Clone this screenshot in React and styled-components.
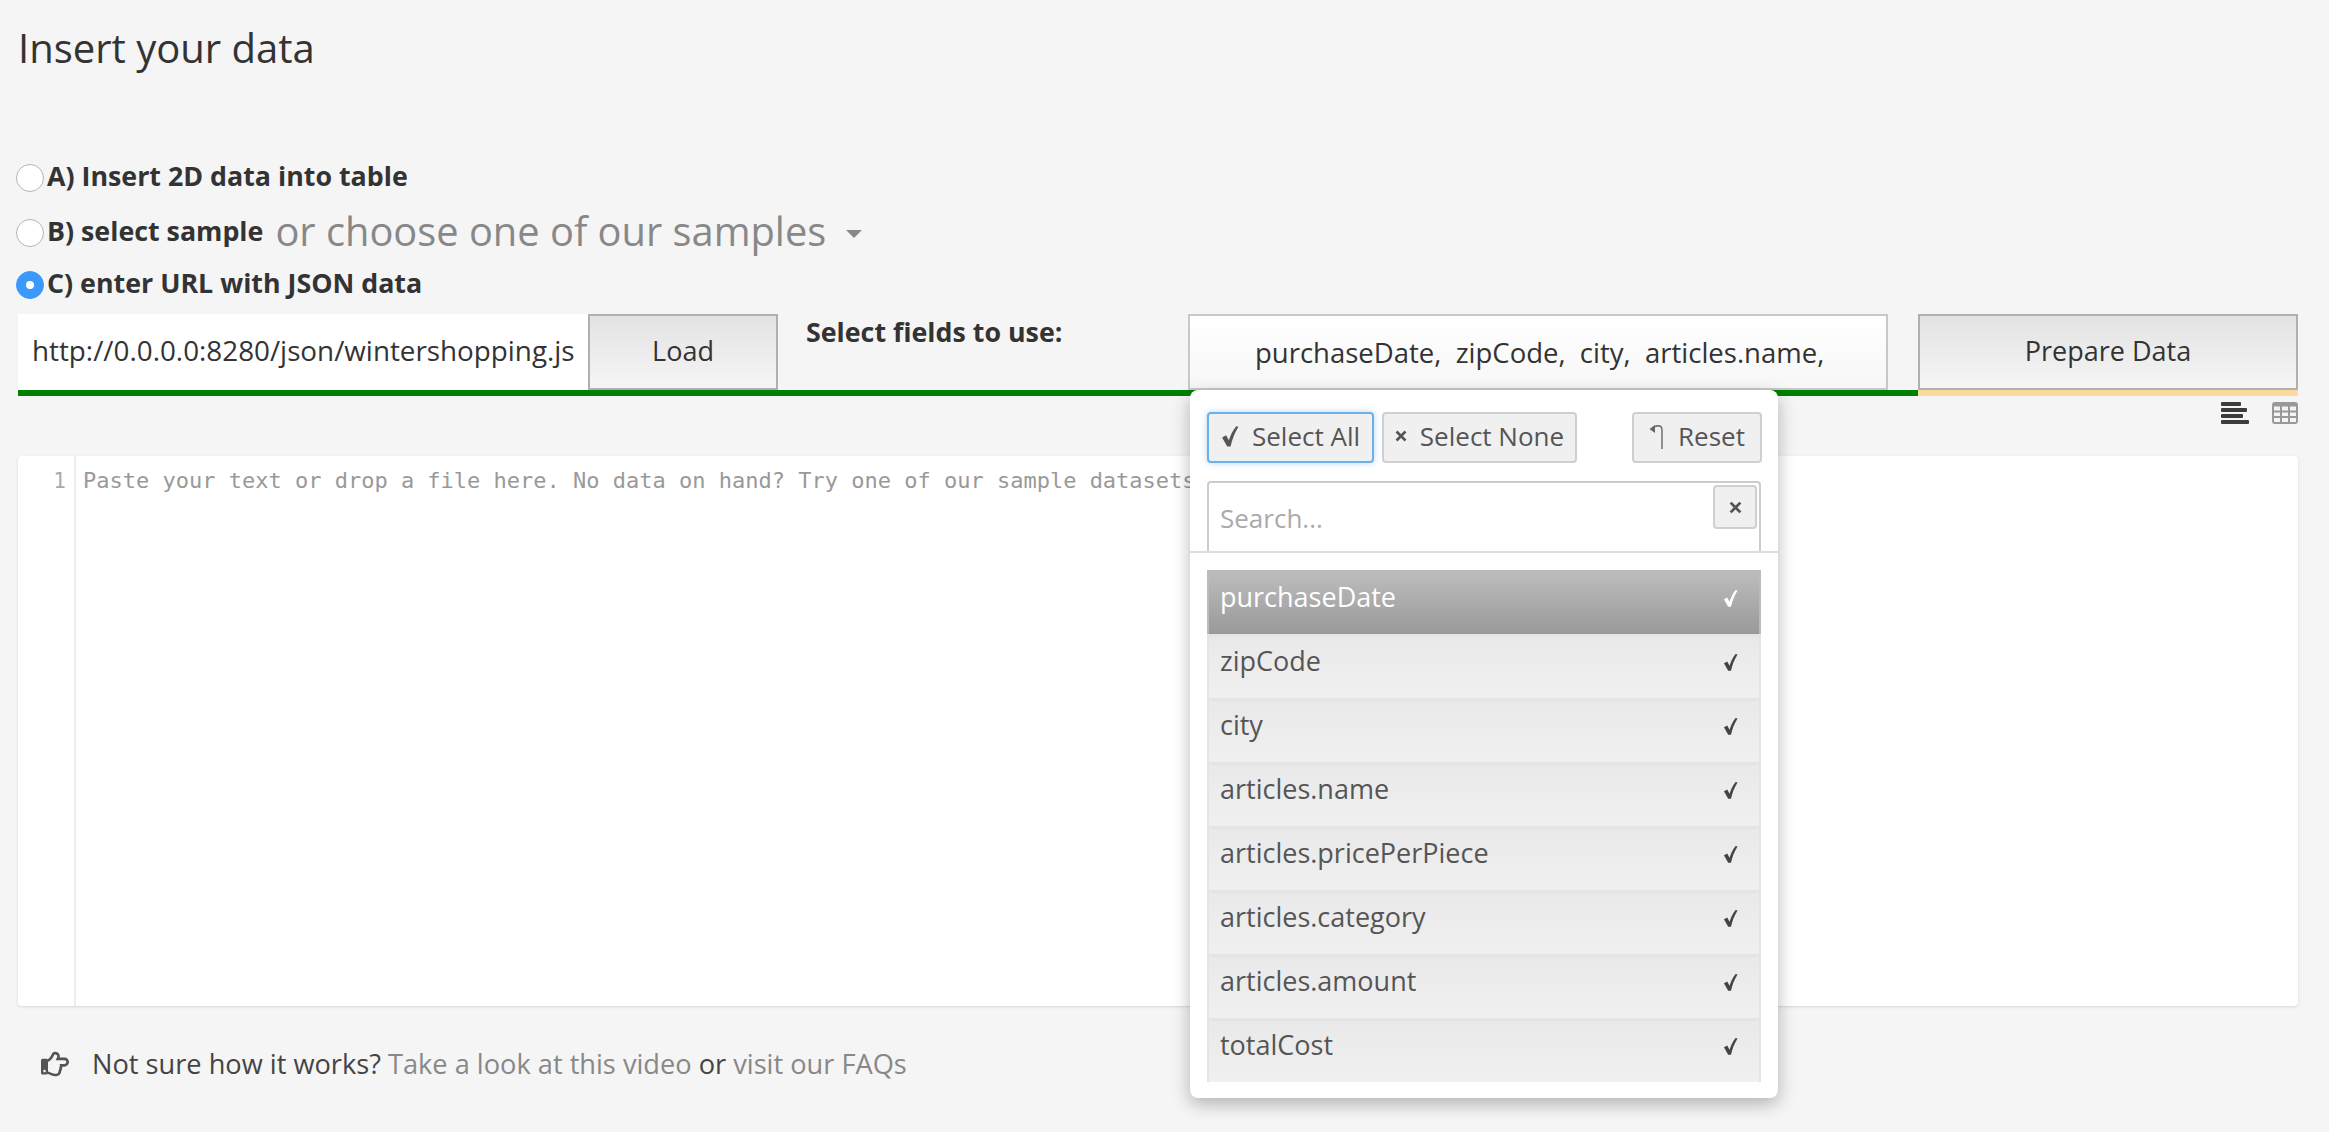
import styled, { createGlobalStyle } from "styled-components";
import { FaRegHandPointRight } from "react-icons/fa";

const fields = [
  "purchaseDate",
  "zipCode",
  "city",
  "articles.name",
  "articles.pricePerPiece",
  "articles.category",
  "articles.amount",
  "totalCost",
];

function Check({ size = 16, color = "#555" }) {
  return (
    <svg width={size} height={size * 1.25} viewBox="0 0 16 20">
      <path d="M1 11 L4.5 9 L7 13.5 C8.5 9 10.5 4.5 13.5 1 L15.5 1.5 C12 7 10 12.5 8.5 19 L5.5 19 Z" fill={color} />
    </svg>
  );
}

function Cross({ size = 12 }) {
  return (
    <svg width={size} height={size} viewBox="0 0 12 12">
      <path d="M1.5 1.5 L10.5 10.5 M10.5 1.5 L1.5 10.5" stroke="#555" strokeWidth="2.6" />
    </svg>
  );
}

function App() {
  return (
    <Page>
      <GlobalStyle />
      <Title>Insert your data</Title>

      <RadioRow>
        <Radio />
        <RadioLabel>A) Insert 2D data into table</RadioLabel>
      </RadioRow>
      <RadioRow $gap={55}>
        <Radio />
        <RadioLabel>B) select sample</RadioLabel>
        <SampleSelect>or choose one of our samples</SampleSelect>
        <Caret />
      </RadioRow>
      <RadioRow $gap={52}>
        <Radio $checked />
        <RadioLabel>C) enter URL with JSON data</RadioLabel>
      </RadioRow>

      <Toolbar>
        <LeftBar>
          <UrlInput readOnly value="http://0.0.0.0:8280/json/wintershopping.json" />
          <ActionButton $width={190}>Load</ActionButton>
          <FieldsLabel>Select fields to use:</FieldsLabel>
          <SelectWrap>
            <SelectBox>purchaseDate,&nbsp; zipCode,&nbsp; city,&nbsp; articles.name,</SelectBox>
            <Dropdown>
              <DropdownActions>
                <MiniButton $width={167} $focus>
                  <Check size={18} />
                  Select All
                </MiniButton>
                <MiniButton $width={195}>
                  <Cross />
                  Select None
                </MiniButton>
                <MiniButton $width={130} $push>
                  <svg width="16" height="28" viewBox="0 0 16 28">
                    <path d="M3 7 C6 3 13 2 13 8 L13 27" fill="none" stroke="#666" strokeWidth="1.4" />
                    <path d="M0.5 7 L6 3 L6 11 Z" fill="#666" />
                  </svg>
                  Reset
                </MiniButton>
              </DropdownActions>
              <SearchBox>
                Search...
                <ClearButton>
                  <Cross size={13} />
                </ClearButton>
              </SearchBox>
              <FieldList>
                {fields.map((name, i) => (
                  <FieldItem key={name} $active={i === 0}>
                    {name}
                    <Check size={15} color={i === 0 ? "#fff" : "#444"} />
                  </FieldItem>
                ))}
              </FieldList>
            </Dropdown>
          </SelectWrap>
        </LeftBar>
        <RightBar>
          <ActionButton $width={380}>Prepare Data</ActionButton>
        </RightBar>
      </Toolbar>

      <ViewIcons>
        <svg width="28" height="22" viewBox="0 0 28 22">
          <g fill="#3c3c3c">
            <rect x="0" y="0" width="20" height="4" rx="1" />
            <rect x="0" y="6" width="26" height="4" rx="1" />
            <rect x="0" y="12" width="22" height="4" rx="1" />
            <rect x="0" y="18" width="28" height="4" rx="1" />
          </g>
        </svg>
        <svg width="26" height="22" viewBox="0 0 26 22">
          <rect width="26" height="22" rx="3" fill="#999" />
          <g fill="#f4f4f4">
            <rect x="2" y="4.5" width="6" height="4" />
            <rect x="10" y="4.5" width="6" height="4" />
            <rect x="18" y="4.5" width="6" height="4" />
            <rect x="2" y="10.5" width="6" height="3.5" />
            <rect x="10" y="10.5" width="6" height="3.5" />
            <rect x="18" y="10.5" width="6" height="3.5" />
            <rect x="2" y="16" width="6" height="4" />
            <rect x="10" y="16" width="6" height="4" />
            <rect x="18" y="16" width="6" height="4" />
          </g>
        </svg>
      </ViewIcons>

      <Editor>
        <Gutter>1</Gutter>
        <Placeholder>
          Paste your text or drop a file here. No data on hand? Try one of our sample datasets:
        </Placeholder>
      </Editor>

      <Footer>
        <FaRegHandPointRight size={28} color="#555" />
        <span>
          Not sure how it works? <FooterLink>Take a look at this video</FooterLink> or{" "}
          <FooterLink>visit our FAQs</FooterLink>
        </span>
      </Footer>
    </Page>
  );
}

const GlobalStyle = createGlobalStyle`
  html, body {
    margin: 0;
    padding: 0;
    background: #f5f5f5;
  }
  body {
    font-family: "Open Sans", "Noto Sans", sans-serif;
    color: #333;
  }
  * {
    box-sizing: border-box;
  }
`;

const Page = styled.div`
  width: 2329px;
  height: 1132px;
  padding: 0 31px 0 18px;
  overflow: hidden;
`;

const Title = styled.h1`
  margin: 0;
  height: 164px;
  padding-top: 24px;
  font-size: 40px;
  line-height: 48px;
  font-weight: 400;
  color: #333;
`;

const RadioRow = styled.div`
  height: ${(props) => props.$gap || 28}px;
  margin-left: -3px;
  display: flex;
  align-items: ${(props) => (props.$gap ? "flex-end" : "center")};
  white-space: nowrap;
`;

const Radio = styled.span`
  position: relative;
  flex: none;
  width: 28px;
  height: 28px;
  margin-left: 1px;
  margin-right: 3px;
  border-radius: 50%;
  background: ${(props) => (props.$checked ? "#3b99fc" : "#fff")};
  border: 1px solid ${(props) => (props.$checked ? "#3b99fc" : "#b5b5b5")};

  &::after {
    content: "";
    display: ${(props) => (props.$checked ? "block" : "none")};
    position: absolute;
    left: 9px;
    top: 9px;
    width: 8px;
    height: 8px;
    border-radius: 50%;
    background: #fff;
  }
`;

const RadioLabel = styled.span`
  position: relative;
  top: -2px;
  font-size: 26.8px;
  line-height: 28px;
  font-weight: 700;
  color: #333;
`;

const SampleSelect = styled.span`
  position: relative;
  top: -2px;
  margin-left: 12px;
  font-size: 39.8px;
  line-height: 28px;
  color: #888;
`;

const Caret = styled.span`
  width: 0;
  height: 0;
  margin: 0 0 9px 20px;
  border-left: 8px solid transparent;
  border-right: 8px solid transparent;
  border-top: 8px solid #888;
`;

const Toolbar = styled.div`
  display: flex;
  margin-top: 15px;
  height: 82px;
`;

const LeftBar = styled.div`
  width: 1900px;
  display: flex;
  border-bottom: 6px solid green;
`;

const RightBar = styled.div`
  width: 380px;
  display: flex;
  border-bottom: 6px solid #fada9f;
`;

const UrlInput = styled.input`
  width: 570px;
  height: 76px;
  padding: 0 14px 4px;
  border: 0;
  outline: 0;
  background: #fff;
  font-family: inherit;
  font-size: 27.8px;
  color: #333;
`;

const ActionButton = styled.div`
  flex: none;
  width: ${(props) => props.$width}px;
  height: 76px;
  padding-bottom: 4px;
  display: flex;
  align-items: center;
  justify-content: center;
  border: 2px solid #b0b0b0;
  background: linear-gradient(#e3e3e3, #f5f5f5);
  font-size: 27px;
  color: #333;
`;

const FieldsLabel = styled.div`
  width: 410px;
  padding: 1px 0 0 28px;
  font-size: 26.8px;
  line-height: 34px;
  font-weight: 700;
  color: #333;
`;

const SelectWrap = styled.div`
  position: relative;
  width: 700px;
`;

const SelectBox = styled.div`
  height: 76px;
  padding-left: 65px;
  display: flex;
  align-items: center;
  white-space: nowrap;
  border: 2px solid #c8c8c8;
  background: linear-gradient(#fff, #f7f7f7);
  font-size: 27.5px;
  color: #333;
`;

const Dropdown = styled.div`
  position: absolute;
  z-index: 5;
  left: 2px;
  top: 76px;
  width: 588px;
  height: 708px;
  background: #fff;
  border-radius: 8px;
  box-shadow: 0 6px 18px rgba(0, 0, 0, 0.28);
`;

const DropdownActions = styled.div`
  display: flex;
  gap: 8px;
  padding: 22px 16px 0 17px;
`;

const MiniButton = styled.div`
  width: ${(props) => props.$width}px;
  height: 51px;
  padding-bottom: 3px;
  display: flex;
  align-items: center;
  justify-content: center;
  gap: 13px;
  margin-left: ${(props) => (props.$push ? "auto" : "0")};
  border-radius: 4px;
  border: 2px solid ${(props) => (props.$focus ? "#6cb0ea" : "#cfcfcf")};
  box-shadow: ${(props) => (props.$focus ? "0 0 6px rgba(108, 176, 234, 0.5)" : "none")};
  background: #f0f0f0;
  font-size: 26px;
  color: #555;
`;

const SearchBox = styled.div`
  position: relative;
  margin: 18px 17px 0;
  height: 72px;
  padding: 17px 0 0 11px;
  border: 2px solid #ccc;
  border-bottom: 0;
  border-radius: 4px 4px 0 0;
  font-size: 26px;
  line-height: 36px;
  color: #aaa;

  &::after {
    content: "";
    position: absolute;
    left: -19px;
    right: -19px;
    bottom: 0;
    height: 2px;
    background: #ddd;
  }
`;

const ClearButton = styled.div`
  position: absolute;
  top: 2px;
  right: 2px;
  width: 44px;
  height: 44px;
  display: flex;
  align-items: center;
  justify-content: center;
  border: 2px solid #cfcfcf;
  border-radius: 4px;
  background: #f0f0f0;
`;

const FieldList = styled.div`
  margin: 17px 17px 0;
`;

const FieldItem = styled.div`
  height: 64px;
  display: flex;
  justify-content: space-between;
  padding: 7px 21px 0 11px;
  border-style: solid;
  border-color: ${(props) => (props.$active ? "#bbb" : "#e4e4e4")};
  border-width: 3px 2px 0;
  background: ${(props) =>
    props.$active ? "linear-gradient(#bcbcbc, #999)" : "linear-gradient(#e9e9e9, #f0f0f0)"};
  font-size: 27px;
  line-height: 34px;
  color: ${(props) => (props.$active ? "#fff" : "#555")};

  svg {
    margin-top: 9px;
  }
`;

const ViewIcons = styled.div`
  height: 60px;
  padding-top: 6px;
  display: flex;
  justify-content: flex-end;
  align-items: flex-start;
  gap: 23px;
`;

const Editor = styled.div`
  height: 550px;
  display: flex;
  background: #fff;
  border-radius: 4px;
  box-shadow: 0 1px 3px rgba(0, 0, 0, 0.12);
`;

const Gutter = styled.div`
  width: 58px;
  padding: 10px 8px 0 0;
  text-align: right;
  border-right: 2px solid #eee;
  font-family: "DejaVu Sans Mono", "Liberation Mono", monospace;
  font-size: 21px;
  line-height: 30px;
  color: #aaa;
`;

const Placeholder = styled.div`
  padding: 10px 0 0 7px;
  font-family: "DejaVu Sans Mono", "Liberation Mono", monospace;
  font-size: 22px;
  line-height: 30px;
  color: #999;
  white-space: nowrap;
`;

const Footer = styled.div`
  display: flex;
  align-items: center;
  gap: 23px;
  margin: 41px 0 0 23px;
  font-size: 27.2px;
  line-height: 34px;
  color: #444;
`;

const FooterLink = styled.span`
  color: #888;
`;

export default App;
